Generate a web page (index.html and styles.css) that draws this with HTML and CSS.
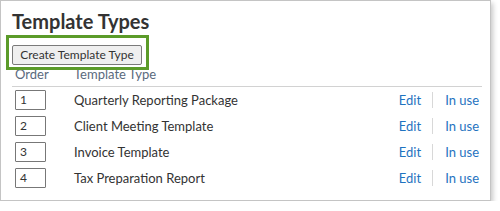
FILE: index.html
```html
<!DOCTYPE html>
<html>
<head>
<meta charset="utf-8">
<link rel="stylesheet" href="styles.css">
</head>
<body>
<div class="panel">
  <h1 class="title">Template Types</h1>
  <div class="toolbar">
    <button class="btn">Create Template Type</button>
    <div class="highlight"></div>
  </div>
  <div class="table">
    <div class="thead">
      <div class="col-order">Order</div>
      <div class="col-name">Template Type</div>
    </div>
    <div class="row">
      <div class="col-order"><span class="order-input">1</span></div>
      <div class="col-name">Quarterly Reporting Package</div>
      <div class="actions"><a class="link">Edit</a><span class="sep"></span><a class="link">In use</a></div>
    </div>
    <div class="row">
      <div class="col-order"><span class="order-input">2</span></div>
      <div class="col-name">Client Meeting Template</div>
      <div class="actions"><a class="link">Edit</a><span class="sep"></span><a class="link">In use</a></div>
    </div>
    <div class="row">
      <div class="col-order"><span class="order-input">3</span></div>
      <div class="col-name">Invoice Template</div>
      <div class="actions"><a class="link">Edit</a><span class="sep"></span><a class="link">In use</a></div>
    </div>
    <div class="row">
      <div class="col-order"><span class="order-input">4</span></div>
      <div class="col-name">Tax Preparation Report</div>
      <div class="actions"><a class="link">Edit</a><span class="sep"></span><a class="link">In use</a></div>
    </div>
  </div>
</div>
</body>
</html>
```
FILE: styles.css
```css
html, body {
  margin: 0;
  padding: 0;
  background: #ffffff;
}
body {
  font-family: Lato, "Open Sans", Arial, sans-serif;
  color: #333333;
}
.panel {
  box-sizing: border-box;
  width: 491px;
  height: 201px;
  border: 1px solid #c4c4c4;
  box-shadow: 2px 3px 5px rgba(0, 0, 0, 0.22);
  padding: 8px 8px 0 11px;
  background: #ffffff;
}
.title {
  margin: 0;
  font-size: 20px;
  line-height: 24px;
  font-weight: bold;
  color: #333333;
}
.toolbar {
  position: relative;
  margin-top: 10px;
  height: 20px;
}
.btn {
  box-sizing: border-box;
  height: 20px;
  width: 130px;
  padding: 0;
  border: 1px solid #7a7a7a;
  border-radius: 2px;
  background: #efefef;
  font-family: Lato, "Open Sans", Arial, sans-serif;
  font-size: 12px;
  color: #333333;
  line-height: 18px;
}
.highlight {
  position: absolute;
  left: -6px;
  top: -8px;
  width: 143px;
  height: 35px;
  box-sizing: border-box;
  border: 3px solid #5b9b29;
  z-index: 2;
}
.table {
  width: 470px;
  margin-top: 2px;
}
.thead {
  display: flex;
  height: 18px;
  line-height: 18px;
  padding-bottom: 3px;
  border-bottom: 1px solid #d2d2d2;
  font-size: 13px;
  color: #5a6a7d;
}
.col-order {
  width: 59px;
  padding-left: 3px;
  flex: none;
}
.col-name {
  flex: 1;
}
.row {
  display: flex;
  align-items: center;
  height: 26px;
  font-size: 13px;
  line-height: 26px;
  color: #333333;
}
.order-input {
  display: block;
  box-sizing: border-box;
  width: 31px;
  height: 20px;
  border: 1px solid #777777;
  border-radius: 1px;
  font-size: 12px;
  line-height: 18px;
  padding-left: 4px;
  color: #333333;
}
.actions {
  display: flex;
  align-items: center;
  padding-right: 3px;
}
.link {
  color: #1f73c0;
}
.sep {
  display: block;
  width: 1px;
  height: 16px;
  background: #d8d8d8;
  margin: 0 12px 0 11px;
}
```
